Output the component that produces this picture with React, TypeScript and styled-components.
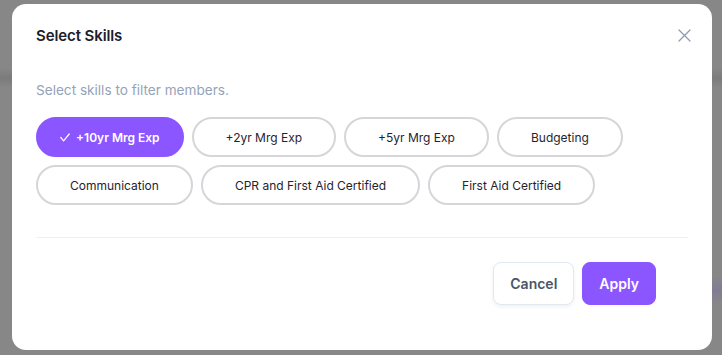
import React, { useState } from "react";
import styled, { createGlobalStyle } from "styled-components";

const GlobalStyle = createGlobalStyle`
  html, body {
    margin: 0;
    padding: 0;
    background: #868686;
    font-family: Inter, "Liberation Sans", sans-serif;
  }
  * {
    box-sizing: border-box;
  }
`;

const Backdrop = styled.div`
  width: 722px;
  height: 355px;
  padding: 4px 0 0 12px;
  overflow: hidden;
  background:
    radial-gradient(ellipse 40px 14px at 716px 290px, rgba(120, 100, 170, 0.35), transparent),
    linear-gradient(
      180deg,
      #878787 0px,
      #878787 68px,
      #7b7b7b 78px,
      #878787 88px,
      #878787 100%
    );
`;

const Modal = styled.div`
  width: 700px;
  height: 346px;
  background: #ffffff;
  border-radius: 14px;
  padding: 20px 24px 0 24px;
  display: flex;
  flex-direction: column;
`;

const Header = styled.div`
  display: flex;
  align-items: center;
  justify-content: space-between;
  height: 22px;
`;

const Title = styled.h2`
  margin: 0;
  font-size: 15px;
  font-weight: 600;
  color: #1d1d2b;
  letter-spacing: -0.1px;
`;

const CloseButton = styled.button`
  background: none;
  border: none;
  padding: 0;
  margin-right: -3px;
  width: 14px;
  height: 14px;
  display: flex;
  align-items: center;
  justify-content: center;
  cursor: pointer;
  color: #8f9bb3;
`;

const Subtitle = styled.p`
  margin: 34px 0 17px 0;
  font-size: 13.6px;
  line-height: 20px;
  color: #94a3b8;
`;

const ChipList = styled.div`
  display: flex;
  flex-wrap: wrap;
  gap: 8px 8px;
`;

const Chip = styled.button<{ $selected?: boolean }>`
  height: 40px;
  padding: ${(p) => (p.$selected ? "0 22px" : "0 32px")};
  border-radius: 999px;
  border: 2px solid ${(p) => (p.$selected ? "#8b55ff" : "#d6d6da")};
  background: ${(p) => (p.$selected ? "#8b55ff" : "#ffffff")};
  color: ${(p) => (p.$selected ? "#ffffff" : "#1f2430")};
  font-family: Inter, "Liberation Sans", sans-serif;
  font-size: 12px;
  font-weight: ${(p) => (p.$selected ? 600 : 400)};
  display: flex;
  align-items: center;
  gap: 6px;
  cursor: pointer;
  white-space: nowrap;
`;

const Divider = styled.hr`
  margin: 32px 0 0 0;
  border: none;
  border-top: 1px solid #eef0f3;
`;

const Footer = styled.div`
  display: flex;
  justify-content: flex-end;
  gap: 8px;
  padding: 24px 32px 0 0;
`;

const FooterButton = styled.button<{ $primary?: boolean }>`
  height: 43px;
  padding: 0 16px;
  border-radius: 8px;
  font-family: Inter, "Liberation Sans", sans-serif;
  font-size: 14px;
  font-weight: 600;
  cursor: pointer;
  border: 1px solid ${(p) => (p.$primary ? "#8b55ff" : "#e2e8f0")};
  background: ${(p) => (p.$primary ? "#8b55ff" : "#ffffff")};
  color: ${(p) => (p.$primary ? "#ffffff" : "#4b5567")};
  box-shadow: ${(p) => (p.$primary ? "none" : "0 2px 4px rgba(15, 23, 42, 0.06)")};
`;

const skills = [
  "+10yr Mrg Exp",
  "+2yr Mrg Exp",
  "+5yr Mrg Exp",
  "Budgeting",
  "Communication",
  "CPR and First Aid Certified",
  "First Aid Certified",
];

const CheckIcon = () => (
  <svg width="10" height="9" viewBox="0 0 10 9" fill="none">
    <polyline
      points="0.8,4.5 3.6,7.8 9.2,1"
      stroke="currentColor"
      strokeWidth="1.2"
      strokeLinecap="round"
      strokeLinejoin="round"
    />
  </svg>
);

const CloseIcon = () => (
  <svg width="13" height="13" viewBox="0 0 13 13" fill="none">
    <path
      d="M1 1L12 12M12 1L1 12"
      stroke="currentColor"
      strokeWidth="1.3"
      strokeLinecap="round"
    />
  </svg>
);

const App: React.FC = () => {
  const [selected, setSelected] = useState<string[]>(["+10yr Mrg Exp"]);

  const toggle = (skill: string) => {
    setSelected((prev) =>
      prev.includes(skill) ? prev.filter((s) => s !== skill) : [...prev, skill]
    );
  };

  return (
    <>
      <GlobalStyle />
      <Backdrop>
        <Modal>
          <Header>
            <Title>Select Skills</Title>
            <CloseButton aria-label="Close">
              <CloseIcon />
            </CloseButton>
          </Header>
          <Subtitle>Select skills to filter members.</Subtitle>
          <ChipList>
            {skills.map((skill) => {
              const isOn = selected.includes(skill);
              return (
                <Chip key={skill} $selected={isOn} onClick={() => toggle(skill)}>
                  {isOn && <CheckIcon />}
                  {skill}
                </Chip>
              );
            })}
          </ChipList>
          <Divider />
          <Footer>
            <FooterButton>Cancel</FooterButton>
            <FooterButton $primary>Apply</FooterButton>
          </Footer>
        </Modal>
      </Backdrop>
    </>
  );
};

export default App;
